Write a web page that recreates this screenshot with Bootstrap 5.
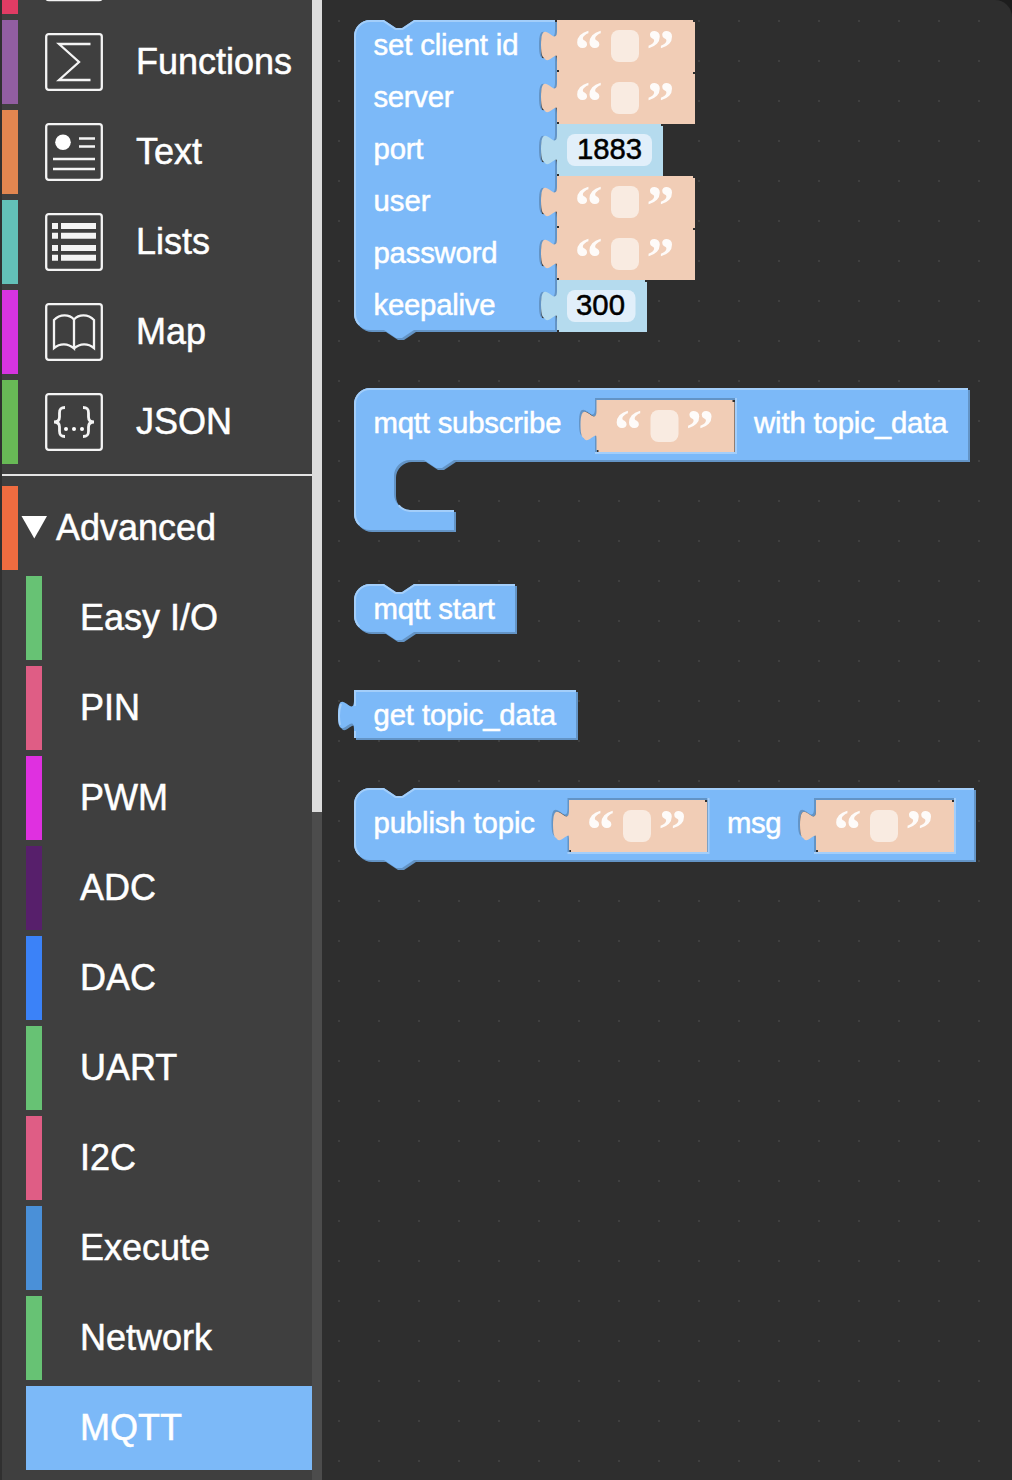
<!DOCTYPE html>
<html lang="en">
<head>
<meta charset="utf-8">
<meta name="viewport" content="width=device-width, initial-scale=1">
<title>Block editor</title>
<link href="https://cdn.jsdelivr.net/npm/bootstrap@5.3.0/dist/css/bootstrap.min.css" rel="stylesheet">
<style>
body{background:#1d1d1d;font-family:"Liberation Sans",Arial,sans-serif;color:#fff}
.editor{height:1480px;width:1012px}
.toolbox{width:312px;background:#3f3f3f;border-left:2px solid #303030;font-size:36px;line-height:1;-webkit-text-stroke:.5px #fff}
.cat{height:84px;margin-bottom:6px;border-left:16px solid var(--c);white-space:nowrap}
.cat-top{padding-left:27px;gap:33px}
.cat-sub{margin-left:24px;padding-left:38px}
.cat-cut{height:14px}
.cat-on{background:var(--c)}
.cat-adv{padding-left:3px;gap:8px}
.divide{height:2px;background:#e4e4e4;margin:4px 0 10px}
.ico{width:58px;height:58px;fill:none;stroke:#f4f4f4;stroke-width:2.3;flex:none}
.ico .solid{fill:#fff;stroke:none}
.track{width:10px;background:#4c4c4c}
.thumb{height:812px;background:#dcdcdc}
.canvas-area{background:#2e2e2e;border-top-right-radius:17px;width:690px}
.canvas-area svg{font-size:29.33px;fill:#fff}
.canvas-area text{stroke:#fff;stroke-width:.5px}
.b-main{fill:#7cb9f8}
.b-dark{fill:#6394c6}
.b-light{fill:none;stroke:#a3cefa;stroke-width:2}
.canvas-area .q-mark{font-family:"Liberation Serif",serif;font-weight:700;font-size:56px;stroke:none;opacity:.93}
.canvas-area .num{fill:#000;stroke:#000}
</style>
<script src="https://cdn.jsdelivr.net/npm/bootstrap@5.3.0/dist/js/bootstrap.bundle.min.js"></script>
</head>
<body class="overflow-hidden">
<div class="editor d-flex overflow-hidden">
<nav class="toolbox d-flex flex-column flex-shrink-0 overflow-hidden">
  <div class="cat cat-cut cat-top d-flex align-items-start flex-shrink-0 overflow-hidden" style="--c:#e03c64"><svg class="ico" viewBox="0 0 58 58"><path d="M1-3Q1 .2 4 .2H54Q57 .2 57-3"/></svg></div>
  <div class="cat cat-top d-flex align-items-center flex-shrink-0" style="--c:#925ea2"><svg class="ico" viewBox="0 0 58 58"><rect x="1.2" y="1.2" width="55.6" height="55.6" rx="2.5"/><path d="M45.5 11H14L34 29 14 47H45.5"/></svg><span>Functions</span></div>
  <div class="cat cat-top d-flex align-items-center flex-shrink-0" style="--c:#e28650"><svg class="ico" viewBox="0 0 58 58"><rect x="1.2" y="1.2" width="55.6" height="55.6" rx="2.5"/><circle class="solid" cx="18" cy="19.3" r="7.8"/><path d="M34 15.5H50M34 23.5H50M8 36H50M8 46H50"/></svg><span>Text</span></div>
  <div class="cat cat-top d-flex align-items-center flex-shrink-0" style="--c:#63c1b8"><svg class="ico" viewBox="0 0 58 58"><rect x="1.2" y="1.2" width="55.6" height="55.6" rx="2.5"/><path stroke-width="6" d="M7 13h6M16 13H51M7 22.7h6M16 22.7H51M7 35h6M16 35H51M7 44.7h6M16 44.7H51"/></svg><span>Lists</span></div>
  <div class="cat cat-top d-flex align-items-center flex-shrink-0" style="--c:#d634e0"><svg class="ico" viewBox="0 0 58 58"><rect x="1.2" y="1.2" width="55.6" height="55.6" rx="2.5"/><path d="M29 16.5C24 11 15 11 9 17V45C15 40 23 40 29 45.5V16.5C34 11 43 11 49 17V45C43 40 35 40 29 45.5"/></svg><span>Map</span></div>
  <div class="cat cat-top d-flex align-items-center flex-shrink-0" style="--c:#68b956"><svg class="ico" viewBox="0 0 58 58"><rect x="1.2" y="1.2" width="55.6" height="55.6" rx="2.5"/><path stroke-width="2.8" d="M20 14.500C15.500 14.500 14.500 16 14.500 20V24Q14.500 29 9 29Q14.500 29 14.500 34V38C14.500 42 15.500 43.500 20 43.500M38 14.500C42.500 14.500 43.500 16 43.500 20V24Q43.500 29 49 29Q43.500 29 43.500 34V38C43.500 42 42.500 43.500 38 43.500"/><g class="solid"><circle cx="21" cy="36" r="2"/><circle cx="29" cy="36" r="2"/><circle cx="37" cy="36" r="2"/></g></svg><span>JSON</span></div>
  <div class="divide flex-shrink-0"></div>
  <div class="cat cat-adv d-flex align-items-center flex-shrink-0" style="--c:#f06c40"><svg width="27" height="24" viewBox="0 0 27 24" fill="#fff"><path d="M.5 0H26L13.300 22.500Z"/></svg><span>Advanced</span></div>
  <div class="cat cat-sub d-flex align-items-center flex-shrink-0" style="--c:#67c274">Easy I/O</div>
  <div class="cat cat-sub d-flex align-items-center flex-shrink-0" style="--c:#df5d85">PIN</div>
  <div class="cat cat-sub d-flex align-items-center flex-shrink-0" style="--c:#df30e0">PWM</div>
  <div class="cat cat-sub d-flex align-items-center flex-shrink-0" style="--c:#571f6b">ADC</div>
  <div class="cat cat-sub d-flex align-items-center flex-shrink-0" style="--c:#3b82f8">DAC</div>
  <div class="cat cat-sub d-flex align-items-center flex-shrink-0" style="--c:#67c274">UART</div>
  <div class="cat cat-sub d-flex align-items-center flex-shrink-0" style="--c:#df5d85">I2C</div>
  <div class="cat cat-sub d-flex align-items-center flex-shrink-0" style="--c:#4a90d8">Execute</div>
  <div class="cat cat-sub d-flex align-items-center flex-shrink-0" style="--c:#67c274">Network</div>
  <div class="cat cat-sub cat-on d-flex align-items-center flex-shrink-0" style="--c:#7cb9f8">MQTT</div>
</nav>
<div class="track flex-shrink-0"><div class="thumb"></div></div>
<main class="canvas-area flex-shrink-0 overflow-hidden">
<svg class="d-block" width="690" height="1480" viewBox="322 0 690 1480">
<defs>
  <pattern id="grid" x="338" y="20" width="40" height="40" patternUnits="userSpaceOnUse"><rect width="2" height="2" fill="#3f3f3f"/></pattern>
  <path id="strShape" d="M0 0H136V50H0V40C0 20-16 56-16 25S0 30 0 10Z"/>
  <g id="str">
    <g fill="#f1cdb6"><use href="#strShape" x="2" y="2"/><use href="#strShape"/></g>
    <rect x="54" y="10" width="28" height="32" rx="8" fill="#f9ebe1"/>
    <text class="q-mark" x="17.500" y="48.500">“</text>
    <text class="q-mark" x="89.500" y="48.500">”</text>
  </g>
  <path id="p1" d="M354 36A16 16 0 0 1 370 20H384l12 8h6l12-8H555V30c0 20-16-16-16 15s16-5 16 15V82c0 20-16-16-16 15s16-5 16 15V134c0 20-16-16-16 15s16-5 16 15V186c0 20-16-16-16 15s16-5 16 15V238c0 20-16-16-16 15s16-5 16 15V290c0 20-16-16-16 15s16-5 16 15V330H414l-12 8h-6l-12-8H370A16 16 0 0 1 354 314Z"/>
  <path id="p2" fill-rule="evenodd" d="M354 404A16 16 0 0 1 370 388H968V460H454l-12 8h-6l-12-8H410A16 16 0 0 0 394 476V494A16 16 0 0 0 410 510H454V530H370A16 16 0 0 1 354 514ZM595 398H735V452H595V438c0-20-16 16-16-15s16 5 16-15Z"/>
  <path id="p3" d="M354 600A16 16 0 0 1 370 584H384l12 8h6l12-8H515V632H414l-12 8h-6l-12-8H370A16 16 0 0 1 354 616Z"/>
  <path id="p4" d="M354 690H576V738H354V730c0-20-16 16-16-15s16 5 16-15Z"/>
  <path id="p5" fill-rule="evenodd" d="M354 804A16 16 0 0 1 370 788H384l12 8h6l12-8H974V860H414l-12 8h-6l-12-8H370A16 16 0 0 1 354 844ZM567.500 798H707.500V852H567.500V838c0-20-16 16-16-15s16 5 16-15ZM814 798H954V852H814V838c0-20-16 16-16-15s16 5 16-15Z"/>
</defs>
<rect x="322" width="690" height="1480" fill="url(#grid)"/>

<g><use class="b-dark" href="#p1" x="2" y="2"/><use class="b-main" href="#p1"/>
<path class="b-light" d="M359.400 324.600A15 15 0 0 1 355 314V36A15 15 0 0 1 370 21H383.500l12 8h7l12-8H555"/>
<text x="373.500" y="54.500" textLength="145">set client id</text>
<text x="373.500" y="106.500" textLength="80">server</text>
<text x="373.500" y="158.500" textLength="50">port</text>
<text x="373.500" y="210.500" textLength="57">user</text>
<text x="373.500" y="262.500" textLength="124">password</text>
<text x="373.500" y="314.500" textLength="122">keepalive</text>
<use href="#str" x="557" y="20"/><use href="#str" x="557" y="72"/><use href="#str" x="557" y="176"/><use href="#str" x="557" y="228"/>
<g fill="#b5dbee"><path id="n1" d="M557 124H661V174H557V164c0-20-16 16-16-15s16 5 16-15Z"/><use href="#n1" x="2" y="2"/><path id="n2" d="M557 280H645V330H557V320c0-20-16 16-16-15s16 5 16-15Z"/><use href="#n2" x="2" y="2"/></g>
<g fill="#e1effa"><rect x="567" y="134" width="85" height="32" rx="8"/><rect x="567" y="290" width="68.500" height="32" rx="8"/></g>
<text class="num" x="577" y="158.500" textLength="65">1883</text><text class="num" x="576" y="314.500" textLength="49">300</text></g>

<g><use class="b-dark" href="#p2" x="2" y="2"/><use class="b-main" href="#p2"/>
<path class="b-light" d="M359.400 524.600A15 15 0 0 1 355 514V404A15 15 0 0 1 370 389H968M398.700 505.300A16 16 0 0 0 410 511H454M595 453H736V398"/>
<text x="373.500" y="432.500" textLength="188">mqtt subscribe</text><use href="#str" x="596.500" y="400"/>
<text x="754" y="432.500" textLength="193.500">with topic_data</text></g>

<g><use class="b-dark" href="#p3" x="2" y="2"/><use class="b-main" href="#p3"/>
<path class="b-light" d="M359.400 626.600A15 15 0 0 1 355 616V600A15 15 0 0 1 370 585H383.500l12 8h7l12-8H515"/>
<text x="373.500" y="618.500" textLength="121.500">mqtt start</text></g>

<g><use class="b-dark" href="#p4" x="2" y="2"/><use class="b-main" href="#p4"/>
<path class="b-light" d="M355 738V731M340 725C338.500 718 338.500 711 341 704M355 706V691H576"/>
<text x="373.500" y="724.500" textLength="182.500">get topic_data</text></g>

<g><use class="b-dark" href="#p5" x="2" y="2"/><use class="b-main" href="#p5"/>
<path class="b-light" d="M359.400 854.600A15 15 0 0 1 355 844V804A15 15 0 0 1 370 789H383.500l12 8h7l12-8H974M567.500 853H708.500V798M814 853H955V798"/>
<text x="373.500" y="832.500" textLength="161.500">publish topic</text><use href="#str" x="569" y="800"/>
<text x="727" y="832.500" textLength="54.500">msg</text><use href="#str" x="816" y="800"/></g>
</svg>
</main>
</div>
</body>
</html>
